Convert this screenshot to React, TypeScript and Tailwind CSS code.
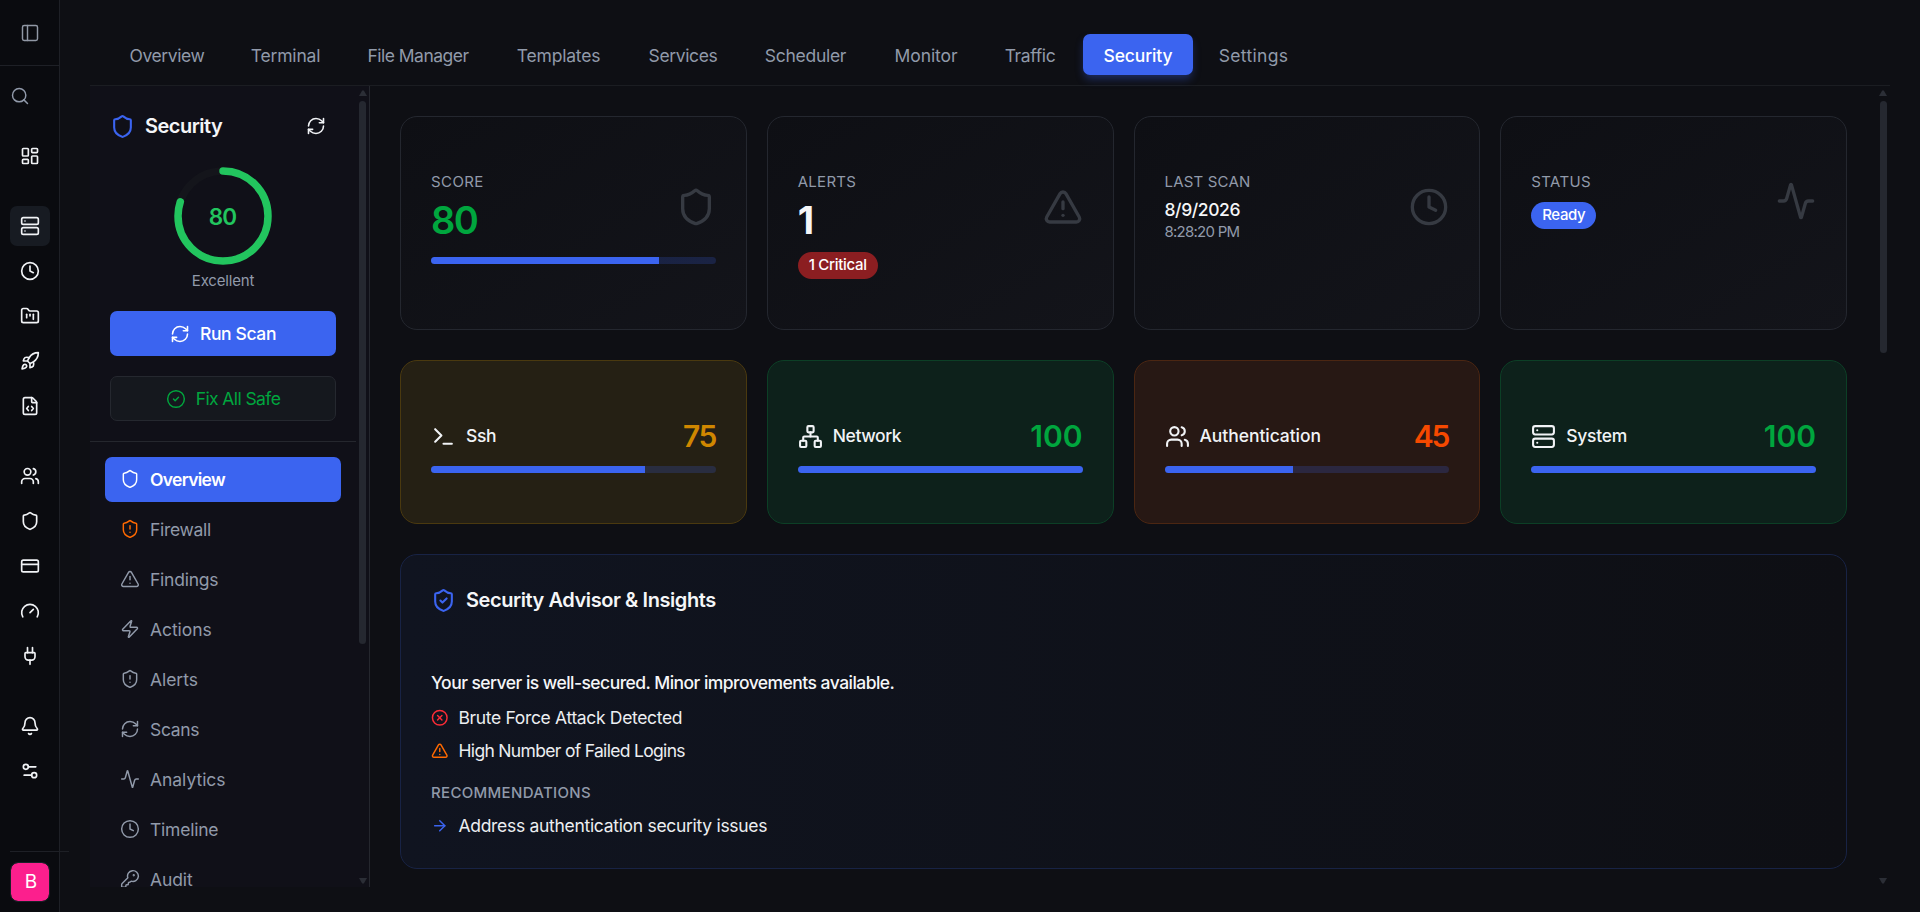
import {
  Activity, ArrowRight, Bell, CircleCheck, CircleX, Clock, CreditCard, FileCode, FolderKanban, Gauge, KeyRound,
  LayoutDashboard, Network, PanelLeft, Plug, RefreshCw, Rocket, Search, Server, Settings2, Shield, ShieldAlert,
  ShieldCheck, Terminal, TriangleAlert, Users, Zap, type LucideIcon,
} from "lucide-react";
import type { ReactNode } from "react";

const railGroups: { icon: LucideIcon; active?: boolean }[][] = [
  [{ icon: LayoutDashboard }],
  [{ icon: Server, active: true }, { icon: Clock }, { icon: FolderKanban }, { icon: Rocket }, { icon: FileCode }],
  [{ icon: Users }, { icon: Shield }, { icon: CreditCard }, { icon: Gauge }, { icon: Plug }],
  [{ icon: Bell }, { icon: Settings2 }],
];

const tabs = [
  { label: "Overview", cls: "w-[116px] tracking-[-0.41px]" },
  { label: "Terminal", cls: "w-[109px] mr-px tracking-[-0.18px]" },
  { label: "File Manager", cls: "w-[142px] mr-px tracking-[-0.52px]" },
  { label: "Templates", cls: "w-[125px] mr-px tracking-[-0.19px]" },
  { label: "Services", cls: "w-[110px] tracking-[-0.37px]" },
  { label: "Scheduler", cls: "w-[123px] mr-px tracking-[-0.29px]" },
  { label: "Monitor", cls: "w-[104px] tracking-[-0.07px]" },
  { label: "Traffic", cls: "w-[92px] mr-px tracking-[-0.37px]" },
  { label: "Security", cls: "w-[110px] tracking-[-0.13px]", active: true },
  { label: "Settings", cls: "w-[109px] tracking-[0.32px]" },
];

const sections: { label: string; icon: LucideIcon; cls: string; iconCls?: string; active?: boolean }[] = [
  { label: "Overview", icon: Shield, cls: "tracking-[-0.7px]", active: true },
  { label: "Firewall", icon: ShieldAlert, cls: "tracking-[-0.31px]", iconCls: "text-[#ff6900]" },
  { label: "Findings", icon: TriangleAlert, cls: "tracking-[-0.23px]" },
  { label: "Actions", icon: Zap, cls: "tracking-[-0.06px]" },
  { label: "Alerts", icon: ShieldAlert, cls: "tracking-[-0.05px]" },
  { label: "Scans", icon: RefreshCw, cls: "tracking-[-0.32px]" },
  { label: "Analytics", icon: Activity, cls: "tracking-[-0.04px]" },
  { label: "Timeline", icon: Clock, cls: "tracking-[-0.23px]" },
  { label: "Audit", icon: KeyRound, cls: "tracking-[-0.09px]" },
];

const categories = [
  { label: "Ssh", value: 75, icon: Terminal, card: "border-[#4a390f] bg-[#252014]", num: "text-[#d08700] tracking-[-1.6px]", cls: "tracking-[-0.36px]" },
  { label: "Network", value: 100, icon: Network, card: "border-[#0c3f26] bg-[#0d211b]", num: "text-[#00a63e] tracking-[0px]", cls: "tracking-[-0.43px]" },
  { label: "Authentication", value: 45, icon: Users, card: "border-[#4b2612] bg-[#271814]", num: "text-[#f54900] tracking-[-2.2px] mr-px", cls: "tracking-[-0.06px]" },
  { label: "System", value: 100, icon: Server, card: "border-[#0c3f26] bg-[#0d211b]", num: "text-[#00a63e] tracking-[0px]", cls: "tracking-[-0.27px]" },
];

function Progress({ value }: { value: number }) {
  return (
    <div className="h-[7px] w-full overflow-hidden rounded-full bg-[#3b64f0]/20">
      <div className="h-full bg-[#3b64f0]" style={{ width: `${value}%` }} />
    </div>
  );
}

function StatCard({ label, labelCls, icon: Icon, children, footer }: { label: string; labelCls: string; icon: LucideIcon; children: ReactNode; footer?: ReactNode }) {
  return (
    <div className="h-[214px] rounded-[17px] border border-[#24272f] bg-gradient-to-br from-[#0e0f14] to-[#13141a] px-[30px] pt-[55px]">
      <div className="flex items-center justify-between">
        <div>
          <div className={"text-[15px] leading-[20px] text-[#919aaa] " + labelCls}>{label}</div>
          {children}
        </div>
        <Icon size={40} className="text-[#363a42]" />
      </div>
      {footer}
    </div>
  );
}

function ScrollArrow({ down = false }: { down?: boolean }) {
  return (
    <svg width="8" height="6" viewBox="0 0 8 6" className="text-[#2b2e36]">
      <path d={down ? "M0 0h8L4.8 5.5H3.2z" : "M0 6h8L4.8 .5H3.2z"} fill="currentColor" />
    </svg>
  );
}

function Rail() {
  return (
    <aside className="flex w-[60px] shrink-0 flex-col border-r border-[#1e2026] bg-[#0a0b0f]">
      <div className="flex h-[66px] items-center justify-center border-b border-[#1e2026] text-[#9198a5]">
        <PanelLeft size={20} strokeWidth={1.75} />
      </div>
      <div className="flex h-[60px] items-center pl-[10px] text-[#919aaa]">
        <Search size={20} strokeWidth={1.75} />
      </div>
      <nav className="flex flex-1 flex-col gap-[30px] pt-[10px] pl-[10px]">
        {railGroups.map((group, g) => (
          <div key={g} className="flex flex-col gap-[5px]">
            {group.map(({ icon: Icon, active }, i) => (
              <div key={i} className={"flex size-[40px] items-center justify-center rounded-[7px] text-[#f1f3f6] " + (active ? "bg-[#171b22]" : "")}>
                <Icon size={20} strokeWidth={2} />
              </div>
            ))}
          </div>
        ))}
      </nav>
      <div className="ml-[10px] h-[61px] w-[59px] border-t border-[#1e2026] pt-[11px]">
        <div className="ml-px flex size-[38px] items-center justify-center rounded-[7px] bg-[#fc1f8d] pt-px pl-[2px] text-[19px] text-white outline-1 outline-[#1b2028]">B</div>
      </div>
    </aside>
  );
}

function SecurityPanel() {
  return (
    <div className="flex h-[801px] w-[280px] shrink-0 overflow-hidden border-r border-[#25272e] bg-[#101018]">
      <div className="w-[266px] shrink-0">
        <div className="h-[356px] border-b border-[#25272e] px-[20px] pt-[20px]">
          <div className="flex h-[40px] items-center">
            <Shield size={25} className="text-[#3b64f0]" />
            <span className="ml-[10px] text-[20px] font-semibold tracking-[-0.5px] text-[#f5f6f8]">Security</span>
            <RefreshCw size={20} strokeWidth={1.9} className="mr-[10px] ml-auto text-[#f1f3f6]" />
          </div>
          <div className="mt-[20px] grid h-[100px] place-items-center">
            <svg width="100" height="100" viewBox="0 0 100 100" className="col-start-1 row-start-1 -rotate-90">
              <circle cx="50" cy="50" r="45" fill="none" stroke="#14151b" strokeWidth="7.5" />
              <circle cx="50" cy="50" r="45" fill="none" stroke="#22c55e" strokeWidth="7.5" strokeLinecap="round" strokeDasharray="226.2 282.74" />
            </svg>
            <span className="col-start-1 row-start-1 pt-px pr-[1px] text-[22.5px] font-semibold tracking-[-0.9px] text-[#22c55e]">80</span>
          </div>
          <div className="mt-[5px] text-center text-[15px] leading-[20px] tracking-[-0.19px] text-[#919aaa]">Excellent</div>
          <button className="mt-[20px] flex h-[45px] w-[226px] items-center justify-center rounded-[7px] bg-[#3b64f0] text-[17.5px] font-medium tracking-[-0.37px] text-white">
            <RefreshCw size={20} strokeWidth={1.9} className="mr-[10px]" />
            <span className="pt-[2px]">Run Scan</span>
          </button>
          <button className="mt-[20px] flex h-[45px] w-[226px] items-center justify-center rounded-[7px] border border-[#25282f] bg-[#15181e] text-[17.5px] tracking-[-0.59px] text-[#00a63e]">
            <CircleCheck size={20} strokeWidth={1.75} className="mr-[10px]" />
            <span className="pt-[2px]">Fix All Safe</span>
          </button>
        </div>
        <nav className="flex flex-col gap-[5px] pt-[15px] pl-[15px]">
          {sections.map(({ label, icon: Icon, cls, iconCls, active }) => (
            <div
              key={label}
              className={"flex h-[45px] w-[236px] shrink-0 items-center gap-[10px] rounded-[7px] pl-[15px] text-[17.5px] " + cls + (active ? " bg-[#3b64f0] font-semibold text-white" : " text-[#919aaa]")}
            >
              <Icon size={20} strokeWidth={1.75} className={"-mt-px " + (iconCls ?? "")} />
              <span className="pt-[2px]">{label}</span>
            </div>
          ))}
        </nav>
      </div>
      <div className="flex w-[13px] flex-col items-center pt-[4px] pb-[3px]">
        <ScrollArrow />
        <div className="mt-[5px] mb-auto h-[543px] w-[7px] rounded-full bg-[#252830]" />
        <ScrollArrow down />
      </div>
    </div>
  );
}

function Insight({ icon: Icon, iconCls, cls, children }: { icon: LucideIcon; iconCls: string; cls: string; children: ReactNode }) {
  return (
    <div className={"flex h-[25px] items-center gap-[10px] text-[17.5px] text-[#eceef1] " + cls}>
      <Icon size={17.5} strokeWidth={2} className={iconCls} />
      <span className="pt-[2px]">{children}</span>
    </div>
  );
}

export default function App() {
  return (
    <div className="flex h-[912px] w-[1920px] overflow-hidden bg-[#0e0f14] font-['Inter',sans-serif]">
      <Rail />
      <main className="flex min-w-0 flex-1 flex-col px-[30px]">
        <div className="flex h-[86px] shrink-0 items-start gap-[6px] border-b border-[#1b1d22] pt-[34px] pl-[19px]">
          {tabs.map(({ label, cls, active }) => (
            <div
              key={label}
              className={"flex h-[41px] items-center justify-center rounded-[7px] pt-[3px] text-[17.5px] whitespace-nowrap " + cls + (active ? " bg-[#3b64f0] font-medium text-white shadow-[0_5px_8px_-1px_rgba(59,100,240,0.35)]" : " text-[#919aaa]")}
            >
              {label}
            </div>
          ))}
        </div>
        <div className="flex">
          <SecurityPanel />
          <div className="flex h-[802px] min-w-0 flex-1">
            <div className="ml-[30px] flex w-[1447px] shrink-0 flex-col gap-[30px] pt-[30px]">
              <div className="grid grid-cols-4 gap-[20px]">
                <StatCard label="SCORE" labelCls="tracking-[0.4px]" icon={Shield} footer={<div className="mt-[15px]"><Progress value={80} /></div>}>
                  <div className="mt-[5px] mb-[-2px] text-[38px] leading-[47px] font-semibold tracking-[-1.7px] text-[#00a63e]">80</div>
                </StatCard>
                <StatCard
                  label="ALERTS"
                  labelCls="tracking-[0.26px]"
                  icon={TriangleAlert}
                  footer={<div className="mt-[10px] flex h-[27px] w-[80px] items-center justify-center rounded-full bg-[#8b1e21] text-[15px] font-medium tracking-[-0.3px] text-white">1 Critical</div>}
                >
                  <div className="mt-[5px] mb-[-2px] text-[38px] leading-[47px] font-bold text-[#f5f6f8]">1</div>
                </StatCard>
                <StatCard label="LAST SCAN" labelCls="tracking-[0.19px]" icon={Clock}>
                  <div className="mt-[5px] text-[17.5px] leading-[25px] font-medium tracking-[-0.42px] text-[#f5f6f8]">8/9/2026</div>
                  <div className="text-[15px] leading-[20px] tracking-[-0.75px] text-[#919aaa]">8:28:20 PM</div>
                </StatCard>
                <StatCard label="STATUS" labelCls="tracking-[0.35px]" icon={Activity}>
                  <div className="mt-[10px] flex h-[27px] w-[65px] items-center justify-center rounded-full bg-[#3b64f0] text-[15px] font-medium tracking-[-0.39px] text-white">Ready</div>
                </StatCard>
              </div>
              <div className="grid grid-cols-4 gap-[20px]">
                {categories.map(({ label, value, icon: Icon, card, num, cls }) => (
                  <div key={label} className={"h-[164px] rounded-[17px] border px-[30px] pt-[55px] " + card}>
                    <div className="flex h-[40px] items-center">
                      <Icon size={25} className="text-[#f1f3f6]" />
                      <span className={"ml-[10px] text-[17.5px] font-medium text-[#f1f3f6] " + cls}>{label}</span>
                      <span className={"ml-auto pt-px text-[30px] font-semibold " + num}>{value}</span>
                    </div>
                    <div className="mt-[10px]"><Progress value={value} /></div>
                  </div>
                ))}
              </div>
              <div className="h-[315px] rounded-[17px] border border-[#182345] bg-gradient-to-r from-[#101420] to-[#0e0f14] px-[30px] pt-[30px]">
                <div className="flex h-[30px] items-center gap-[10px]">
                  <ShieldCheck size={25} className="text-[#3b64f0]" />
                  <h2 className="text-[20px] font-semibold tracking-[-0.43px] text-[#f5f6f8]">Security Advisor &amp; Insights</h2>
                </div>
                <p className="mt-[55px] text-[17.5px] leading-[25px] font-medium tracking-[-0.54px] text-[#f5f6f8]">Your server is well-secured. Minor improvements available.</p>
                <div className="mt-[10px] flex flex-col gap-[8px]">
                  <Insight icon={CircleX} iconCls="text-[#fb2c36]" cls="tracking-[-0.34px]">Brute Force Attack Detected</Insight>
                  <Insight icon={TriangleAlert} iconCls="text-[#ff6900]" cls="tracking-[-0.68px]">High Number of Failed Logins</Insight>
                </div>
                <div className="mt-[20px] text-[15px] leading-[20px] font-medium tracking-[0.33px] text-[#919aaa]">RECOMMENDATIONS</div>
                <div className="mt-[10px]">
                  <Insight icon={ArrowRight} iconCls="text-[#3b64f0]" cls="tracking-[-0.3px]">Address authentication security issues</Insight>
                </div>
              </div>
            </div>
            <div className="ml-auto flex w-[14px] flex-col items-center pt-[4px] pb-[4px]">
              <ScrollArrow />
              <div className="mt-[5px] mb-auto h-[252px] w-[7px] rounded-full bg-[#252830]" />
              <ScrollArrow down />
            </div>
          </div>
        </div>
      </main>
    </div>
  );
}
